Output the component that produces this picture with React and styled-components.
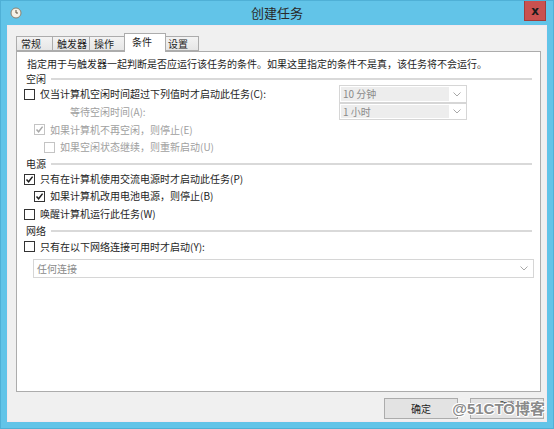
import React from "react";
import styled, { createGlobalStyle } from "styled-components";

const Global = createGlobalStyle`
  html, body { margin: 0; padding: 0; background: #fff; }
  body { font-family: "Noto Sans CJK SC", "Noto Sans", sans-serif; font-size: 10px; color: #1e1e1e; }
  * { box-sizing: border-box; }
`;

const Window = styled.div`
  width: 554px;
  height: 429px;
  background: #62c4e8;
  border: 1px solid #4fb0d6;
  padding: 0 6px 6px 6px;
  display: flex;
  flex-direction: column;
  position: relative;
`;

const TitleBar = styled.div`
  height: 24px;
  display: grid;
  grid-template-columns: 40px 1fr 40px;
  align-items: start;
`;

const TitleIcon = styled.div`
  padding: 6px 0 0 3px;
  display: flex;
`;

const Title = styled.div`
  text-align: center;
  font-size: 13px;
  line-height: 24px;
  color: #2a2a2a;
`;

const CloseWrap = styled.div`
  display: flex;
  justify-content: flex-end;
  padding-right: 1px;
`;

const Close = styled.div`
  width: 22px;
  height: 20px;
  background: #c9514f;
  border: 1px solid #a33d3b;
  border-top: none;
  display: flex;
  align-items: center;
  justify-content: center;
  font-family: "DejaVu Sans", sans-serif;
  font-size: 12px;
  font-weight: bold;
  color: #1b1b1b;
`;

const Client = styled.div`
  flex: 1;
  background: #f0f0f0;
  border: 1px solid #f4e8ee;
  padding: 7px 0 0 8px;
  display: flex;
  flex-direction: column;
`;

const TabRow = styled.div`
  display: flex;
  align-items: flex-end;
  height: 18px;
  position: relative;
  z-index: 1;
`;

const Tab = styled.div`
  width: ${(p) => p.$w}px;
  height: ${(p) => (p.$active ? 19 : 15)}px;
  margin: ${(p) => (p.$active ? "0 -2px -1px -2px" : "0 0 0 -1px")};
  background: ${(p) => (p.$active ? "#fff" : "linear-gradient(#f3f3f3, #e6e6e6)")};
  border: 1px solid #acacac;
  border-bottom: ${(p) => (p.$active ? "none" : "1px solid #acacac")};
  padding-left: ${(p) => (p.$active ? 7 : 4)}px;
  font-size: 10px;
  line-height: ${(p) => (p.$active ? 15 : 13)}px;
  color: #1e1e1e;
  position: relative;
  z-index: ${(p) => (p.$active ? 2 : 1)};
  &:first-child { margin-left: 0; }
`;

const Panel = styled.div`
  height: 341px;
  width: 525px;
  background: #fff;
  border: 1px solid #acacac;
  padding: 5px 0 0 0;
  display: flex;
  flex-direction: column;
`;

const Desc = styled.div`
  height: 14px;
  line-height: 14px;
  padding-left: 10px;
`;

const Heading = styled.div`
  height: ${(p) => p.$h}px;
  display: flex;
  align-items: center;
  padding: 0 8px 0 9px;
  gap: 5px;
  &::after {
    content: "";
    flex: 1;
    height: 2px;
    background: #d9d9d9;
    margin-top: 1px;
  }
`;

const IdleGrid = styled.div`
  display: grid;
  grid-template-columns: 322px 128px;
  grid-template-rows: 18px 18px;
`;

const Row = styled.div`
  height: ${(p) => p.$h || 18}px;
  display: flex;
  align-items: center;
  padding-left: ${(p) => 7 + (p.$indent || 0)}px;
  gap: 5px;
  color: ${(p) => (p.$disabled ? "#a0a0a0" : "#1e1e1e")};
`;

const Label = styled.span`
  white-space: nowrap;
  line-height: 14px;
`;

const Box = styled.span`
  width: 11px;
  height: 11px;
  border: 1px solid ${(p) => (p.$disabled ? "#c4c4c4" : "#333")};
  background: #fff;
  display: inline-flex;
  align-items: center;
  justify-content: center;
  flex: none;
`;

const Combo = styled.div`
  height: ${(p) => p.$h || 18}px;
  width: ${(p) => p.$w || 128}px;
  border: 1px solid #d6d6d6;
  background: #fff;
  display: flex;
  align-items: stretch;
  padding: 1px;
  color: #8a8a8a;
`;

const ComboText = styled.div`
  flex: 1;
  background: ${(p) => (p.$plain ? "#fff" : "#ededed")};
  padding-left: 2px;
  line-height: 14px;
  display: flex;
  align-items: center;
`;

const ComboArrow = styled.div`
  width: 16px;
  display: flex;
  align-items: center;
  justify-content: center;
`;

const NetCombo = styled.div`
  padding: 4px 0 0 16px;
`;

const Footer = styled.div`
  flex: 1;
  display: flex;
  justify-content: flex-end;
  align-items: flex-start;
  gap: 12px;
  padding: 6px 2px 0 0;
  position: relative;
`;

const Button = styled.div`
  width: 74px;
  height: 21px;
  background: #e3e3e3;
  border: 1px solid #acacac;
  display: flex;
  align-items: ${(p) => (p.$top ? "flex-start" : "center")};
  justify-content: center;
  font-size: ${(p) => (p.$top ? 7 : 10)}px;
  color: #1e1e1e;
  line-height: ${(p) => (p.$top ? 8 : 12)}px;
  padding-top: ${(p) => (p.$top ? 1 : 0)}px;
`;

const Watermark = styled.div`
  position: absolute;
  right: 1px;
  top: 9px;
  font-family: "Liberation Sans", "Noto Sans CJK SC", sans-serif;
  font-size: 15px;
  line-height: 16px;
  font-weight: bold;
  color: #8a8a8a;
  text-shadow: -1px 0 #fff, 1px 0 #fff, 0 -1px #fff, 0 1px #fff, 1px 1px #fff, -1px -1px #fff;
`;

const Check = ({ checked, disabled }) => (
  <Box $disabled={disabled}>
    {checked && (
      <svg width="9" height="9" viewBox="0 0 9 9">
        <path d="M1.5 4.5 L3.6 6.8 L7.6 1.6" fill="none" stroke={disabled ? "#a8a8a8" : "#1e1e1e"} strokeWidth="1.5" />
      </svg>
    )}
  </Box>
);

const Arrow = () => (
  <svg width="8" height="5" viewBox="0 0 8 5">
    <path d="M0.5 0.5 L4 4 L7.5 0.5" fill="none" stroke="#a8a8a8" strokeWidth="1" />
  </svg>
);

const ClockIcon = () => (
  <svg width="12" height="12" viewBox="0 0 12 12">
    <circle cx="6" cy="6" r="5" fill="#f4f1e6" stroke="#8a8270" strokeWidth="1" />
    <path d="M6 3 V6 H8" fill="none" stroke="#5a5240" strokeWidth="1" />
  </svg>
);

const tabs = [
  { t: "常规", w: 37 },
  { t: "触发器", w: 38 },
  { t: "操作", w: 37 },
  { t: "条件", w: 42, active: true },
  { t: "设置", w: 36 },
];

export default function App() {
  return (
    <>
      <Global />
      <Window>
        <TitleBar>
          <TitleIcon>
            <ClockIcon />
          </TitleIcon>
          <Title>创建任务</Title>
          <CloseWrap>
            <Close>x</Close>
          </CloseWrap>
        </TitleBar>
        <Client>
          <TabRow>
            {tabs.map((x) => (
              <Tab key={x.t} $w={x.w} $active={x.active}>
                {x.t}
              </Tab>
            ))}
          </TabRow>
          <Panel>
            <Desc>指定用于与触发器一起判断是否应运行该任务的条件。如果这里指定的条件不是真，该任务将不会运行。</Desc>
            <Heading $h={14}>空闲</Heading>
            <IdleGrid>
              <Row>
                <Check />
                <Label>仅当计算机空闲时间超过下列值时才启动此任务(C):</Label>
              </Row>
              <Combo>
                <ComboText>10 分钟</ComboText>
                <ComboArrow>
                  <Arrow />
                </ComboArrow>
              </Combo>
              <Row $indent={46} $disabled>
                <Label>等待空闲时间(A):</Label>
              </Row>
              <Combo $h={17}>
                <ComboText>1 小时</ComboText>
                <ComboArrow>
                  <Arrow />
                </ComboArrow>
              </Combo>
            </IdleGrid>
            <Row $indent={10} $disabled $h={17}>
              <Check checked disabled />
              <Label>如果计算机不再空闲，则停止(E)</Label>
            </Row>
            <Row $indent={20} $disabled $h={18}>
              <Check disabled />
              <Label>如果空闲状态继续，则重新启动(U)</Label>
            </Row>
            <Heading $h={15}>电源</Heading>
            <Row $h={16}>
              <Check checked />
              <Label>只有在计算机使用交流电源时才启动此任务(P)</Label>
            </Row>
            <Row $indent={10} $h={18}>
              <Check checked />
              <Label>如果计算机改用电池电源，则停止(B)</Label>
            </Row>
            <Row $h={18}>
              <Check />
              <Label>唤醒计算机运行此任务(W)</Label>
            </Row>
            <Heading $h={15}>网络</Heading>
            <Row $h={17}>
              <Check />
              <Label>只有在以下网络连接可用时才启动(Y):</Label>
            </Row>
            <NetCombo>
              <Combo $w={501} $h={19}>
                <ComboText $plain>任何连接</ComboText>
                <ComboArrow>
                  <Arrow />
                </ComboArrow>
              </Combo>
            </NetCombo>
          </Panel>
          <Footer>
            <Button>确定</Button>
            <Button $top>取消</Button>
            <Watermark>@51CTO博客</Watermark>
          </Footer>
        </Client>
      </Window>
    </>
  );
}
